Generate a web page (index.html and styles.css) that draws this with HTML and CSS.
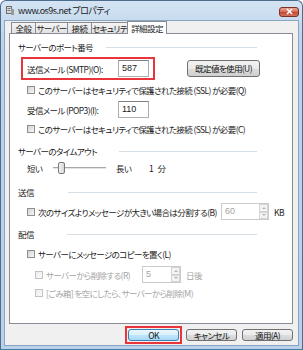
FILE: index.html
```html
<!DOCTYPE html>
<html lang="ja">
<head>
	<meta charset="UTF-8">
	<title>www.os9s.net プロパティ</title>
	<link rel="stylesheet" href="styles.css">
</head>
<body>
	<div class="window">
		<div class="titlebar">
			<svg class="appicon" width="8" height="9" viewBox="0 0 8 9">
				<rect x="0.5" y="0.5" width="5" height="7" fill="#d8d8d8" stroke="#6d6d6d"/>
				<rect x="1.5" y="2" width="3" height="1" fill="#7a7a7a"/>
				<rect x="1.5" y="4" width="3" height="1" fill="#7a7a7a"/>
				<rect x="5" y="3" width="3" height="6" fill="#9a9a9a"/>
			</svg>
			<span class="title">www.os9s.net プロパティ</span>
			<div class="close">
				<svg width="9" height="7" viewBox="0 0 9 7">
					<path d="M2 1 L7 6 M7 1 L2 6" stroke="#fff" stroke-width="1.6"/>
				</svg>
			</div>
		</div>

		<div class="client">
			<div class="tabs">
				<span class="tab tab-general">全般</span>
				<span class="tab tab-server">サーバー</span>
				<span class="tab tab-conn">接続</span>
				<span class="tab tab-sec">セキュリティ</span>
				<span class="tab active">詳細設定</span>
			</div>

			<div class="panel">
				<div class="heading h-port">
					<span class="heading-text">サーバーのポート番号</span>
					<i class="rule"></i>
				</div>

				<div class="smtp-row">
					<div class="mark">
						<span class="field-label">送信メール (SMTP)(O):</span>
						<span class="input">587</span>
					</div>
					<span class="button default-btn">既定値を使用(U)</span>
				</div>

				<div class="check row-q">
					<span class="box"></span>
					<span>このサーバーはセキュリティで保護された接続 (SSL) が必要(Q)</span>
				</div>

				<div class="field-row row-pop">
					<span class="field-label">受信メール (POP3)(I):</span>
					<span class="input">110</span>
				</div>

				<div class="check row-c">
					<span class="box"></span>
					<span>このサーバーはセキュリティで保護された接続 (SSL) が必要(C)</span>
				</div>

				<div class="heading h-timeout">
					<span class="heading-text">サーバーのタイムアウト</span>
					<i class="rule"></i>
				</div>

				<div class="slider-row">
					<span class="slider-min">短い</span>
					<div class="track"><span class="thumb"></span></div>
					<span class="slider-max">長い</span>
					<span class="slider-value">1 分</span>
				</div>

				<div class="heading h-send">
					<span class="heading-text">送信</span>
					<i class="rule"></i>
				</div>

				<div class="check row-split">
					<div class="check-label split-label">
						<span class="box"></span>
						<span>次のサイズよりメッセージが大きい場合は分割する(B)</span>
					</div>
					<span class="input spin disabled split-input">60
						<span class="spinner"><i class="up"></i><i class="down"></i></span>
					</span>
					<span class="unit">KB</span>
				</div>

				<div class="heading h-deliver">
					<span class="heading-text">配信</span>
					<i class="rule"></i>
				</div>

				<div class="check row-l">
					<span class="box"></span>
					<span>サーバーにメッセージのコピーを置く(L)</span>
				</div>

				<div class="check sub row-r">
					<div class="check-label delete-label">
						<span class="box"></span>
						<span class="muted">サーバーから削除する(R)</span>
					</div>
					<span class="input spin disabled delete-input">5
						<span class="spinner"><i class="up"></i><i class="down"></i></span>
					</span>
					<span class="unit muted">日後</span>
				</div>

				<div class="check sub row-m">
					<span class="box"></span>
					<span class="muted">[ごみ箱] を空にしたら、サーバーから削除(M)</span>
				</div>
			</div>

			<div class="actions">
				<div class="mark ok-mark">
					<span class="button ok">OK</span>
				</div>
				<span class="button cancel">キャンセル</span>
				<span class="button apply">適用(A)</span>
			</div>
		</div>
	</div>
</body>
</html>
```

FILE: styles.css
```css
*{
	box-sizing: border-box;
}
body{
	margin: 0;
	font-family: "Noto Sans CJK JP", "Noto Sans", sans-serif;
	font-size: 8.5px;
	letter-spacing: -0.6px;
	font-feature-settings: "palt";
	color: #222;
	line-height: 12px;
}
.window{
	width: 303px;
	height: 350px;
	border: 1px solid #4d6d8c;
	border-bottom-color: #3f7f9f;
	border-radius: 6px 6px 0 0;
	background: linear-gradient(#d4e4f4, #bcd3ea 40px, #b9d1ea);
	padding: 0 3px 3px;
	display: flex;
	flex-direction: column;
}
.titlebar{
	height: 19px;
	display: flex;
	align-items: center;
	padding-left: 2px;
}
.appicon{
	margin-right: 4px;
}
.title{
	color: #1a1a1a;
	font-size: 9px;
	letter-spacing: -0.5px;
}
.close{
	margin-left: auto;
	margin-top: 2px;
	width: 20px;
	height: 10px;
	border: 1px solid #7d3126;
	border-radius: 3px;
	background: linear-gradient(#eaa594, #d36b57 50%, #c0452f 51%, #d6745c);
	display: flex;
	align-items: center;
	justify-content: center;
}
.close svg{
	display: block;
}
.client{
	flex: 1;
	border: 1px solid #8aa5c2;
	background: #f0f0f0;
	padding: 0 5px 0 4px;
}

/* tabs */
.tabs{
	display: flex;
	align-items: flex-end;
	height: 12px;
	padding-left: 2px;
	position: relative;
	z-index: 1;
}
.tab{
	height: 11px;
	border: 1px solid #898c95;
	border-bottom: 0;
	margin-right: -1px;
	background: linear-gradient(#f4f4f4, #e2e2e2);
	text-align: center;
	line-height: 10px;
	white-space: nowrap;
}
.tab-general{ width: 25px; }
.tab-server{ width: 33px; }
.tab-conn{ width: 25px; }
.tab-sec{ width: 38px; }
.tab.active{
	width: 40px;
	height: 13px;
	margin: 0 0 -1px -1px;
	background: #fff;
	line-height: 12px;
}
.panel{
	height: 291px;
	border: 1px solid #898c95;
	background: #fff;
	padding: 7px 8px 0;
}

/* group headings */
.heading{
	display: flex;
	align-items: center;
	width: 239px;
	height: 12px;
}
.heading-text{
	white-space: nowrap;
}
.rule{
	height: 1px;
	margin-left: auto;
	background: #d5dfe5;
}
.h-port .rule{ width: 151px; }
.h-timeout{ margin-top: 10px; }
.h-timeout .rule{ width: 138px; }
.h-send{ margin-top: 11px; }
.h-send .rule{ width: 189px; }
.h-deliver{ margin-top: 8px; }
.h-deliver .rule{ width: 190px; }

/* fields */
.smtp-row{
	display: flex;
	align-items: center;
	margin-top: 4px;
}
.mark{
	display: flex;
	align-items: center;
	border: 2px solid #e8343a;
}
.smtp-row .mark{
	margin-left: 3px;
	padding: 1px 4px 1px 4px;
}
.field-label{
	width: 91px;
	white-space: nowrap;
}
.field-row{
	display: flex;
	align-items: center;
	padding-left: 9px;
	margin-top: 5px;
}
.input{
	position: relative;
	display: block;
	width: 31px;
	height: 17px;
	border: 1px solid #abadb3;
	border-top-color: #7b8087;
	background: #fff;
	padding-left: 3px;
	line-height: 14px;
	font-family: "Liberation Sans", sans-serif;
	font-size: 9px;
	letter-spacing: 0;
}
.button{
	display: block;
	height: 17px;
	border: 1px solid #707070;
	border-radius: 3px;
	background: linear-gradient(#f2f2f2, #ebebeb 50%, #dddddd 51%, #cfcfcf);
	text-align: center;
	line-height: 15px;
	white-space: nowrap;
	color: #111;
}
.default-btn{
	width: 73px;
	margin-left: 32px;
}

/* check rows */
.check{
	display: flex;
	align-items: center;
	height: 12px;
	padding-left: 9px;
	white-space: nowrap;
}
.check.sub{
	padding-left: 17px;
}
.check-label{
	display: flex;
	align-items: center;
}
.box{
	width: 8px;
	height: 8px;
	margin-right: 3px;
	border: 1px solid #8e8f8f;
	background: linear-gradient(135deg, #d2d2d2, #f7f7f7);
	flex-shrink: 0;
}
.sub .box{
	border-color: #c2c2c2;
	background: linear-gradient(135deg, #ececec, #fafafa);
}
.muted{
	color: #a3a3a3;
}
.row-q{ margin-top: 4px; }
.row-c{ margin-top: 5px; }
.row-split{
	height: 17px;
	margin-top: 5px;
}
.split-label{ width: 194px; }
.split-input{ width: 48px; }
.row-l{ margin-top: 8px; }
.row-r{
	height: 17px;
	margin-top: 6px;
}
.delete-label{ width: 107px; }
.delete-input{ width: 39px; }
.row-m{ margin-top: 4px; }
.unit{
	margin-left: 5px;
}
.input.disabled{
	color: #a3a3a3;
	border-color: #c9cbcf;
}
.spinner{
	position: absolute;
	top: 0;
	right: 0;
	width: 9px;
	height: 15px;
	display: flex;
	flex-direction: column;
}
.spinner i{
	flex: 1;
	border: 1px solid #d4d4d4;
	background: #f4f4f4;
	display: flex;
	align-items: center;
	justify-content: center;
}
.spinner i::after{
	content: "";
	border-left: 2px solid transparent;
	border-right: 2px solid transparent;
}
.spinner .up::after{
	border-bottom: 2px solid #b5b5b5;
}
.spinner .down::after{
	border-top: 2px solid #b5b5b5;
}

/* slider */
.slider-row{
	display: flex;
	align-items: center;
	height: 14px;
	padding-left: 9px;
	margin-top: 4px;
	white-space: nowrap;
}
.slider-min{ width: 26px; }
.track{
	position: relative;
	width: 53px;
	height: 3px;
	border-top: 1px solid #a9a9a9;
	border-bottom: 1px solid #fff;
	background: #e4e4e4;
}
.thumb{
	position: absolute;
	left: 5px;
	top: -6px;
	width: 7px;
	height: 12px;
	border: 1px solid #7a7a7a;
	border-radius: 2px;
	background: linear-gradient(90deg, #f3f3f3, #d6d6d6);
}
.slider-max{
	width: 33px;
	margin-left: 10px;
}
.slider-value{
	word-spacing: 3px;
}

/* dialog buttons */
.actions{
	display: flex;
	justify-content: flex-end;
	align-items: center;
	margin-top: 2px;
}
.ok-mark{
	padding: 1px;
}
.actions .button{
	width: 51px;
	height: 12px;
	line-height: 10px;
}
.actions .ok{
	border-color: #3c7fb1;
	background: linear-gradient(#eaf6fd, #d9f0fc 50%, #bee6fd 51%, #a7d9f5);
}
.cancel{
	margin-left: 4px;
}
.apply{
	margin-left: 5px;
}
```
